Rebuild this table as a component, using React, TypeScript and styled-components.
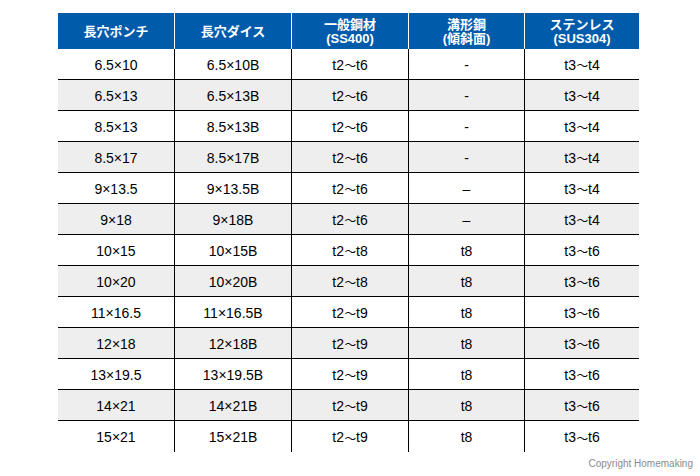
import React from "react";
import styled, { createGlobalStyle } from "styled-components";

const Global = createGlobalStyle`
  html, body { margin: 0; padding: 0; background: #fff; }
  body { font-family: "Liberation Sans", Arial, "Noto Sans CJK JP", sans-serif; }
`;

const Page = styled.div`
  width: 700px;
  height: 476px;
  box-sizing: border-box;
  padding: 13px 0 0 58px;
  display: flex;
  flex-direction: column;
`;

const Table = styled.div`
  display: grid;
  grid-template-columns: 117px 117px 117px 116px 114px;
  width: 581px;
`;

const HeadCell = styled.div<{ $last?: boolean }>`
  height: 36px;
  box-sizing: border-box;
  background: #005bab;
  color: #fff;
  font-family: "Liberation Sans", Arial, "Noto Sans CJK JP", sans-serif;
  font-weight: bold;
  font-size: 13px;
  line-height: 14px;
  display: flex;
  flex-direction: column;
  align-items: center;
  justify-content: center;
  text-align: center;
  border-right: ${(p) => (p.$last ? "none" : "1px solid #fff")};
  padding-top: 1px;
`;

const Cell = styled.div<{ $shade: boolean; $last: boolean; $lastRow: boolean }>`
  height: 31px;
  box-sizing: border-box;
  background: ${(p) => (p.$shade ? "#eeeeee" : "#ffffff")};
  color: #000;
  font-size: 14px;
  display: flex;
  align-items: center;
  justify-content: center;
  border-right: ${(p) => (p.$last ? "none" : "1px solid #000")};
  border-bottom: ${(p) => (p.$lastRow ? "none" : "1px solid #000")};
  padding-top: 1px;
`;

const Wave = styled.span`
  font-family: "Noto Sans CJK JP", sans-serif;
  font-size: 13px;
  display: inline-block;
  width: 12px;
  text-align: center;
  transform: scaleX(0.9);
`;

const Footer = styled.div`
  width: 635px;
  margin-top: 6px;
  text-align: right;
  font-size: 10px;
  color: #8a8a8a;
  font-family: "Liberation Sans", Arial, sans-serif;
`;

const headers: string[][] = [
  ["長穴ポンチ"],
  ["長穴ダイス"],
  ["一般鋼材", "(SS400)"],
  ["溝形鋼", "(傾斜面)"],
  ["ステンレス", "(SUS304)"],
];

const rows: string[][] = [
  ["6.5×10", "6.5×10B", "t2〜t6", "-", "t3〜t4"],
  ["6.5×13", "6.5×13B", "t2〜t6", "-", "t3〜t4"],
  ["8.5×13", "8.5×13B", "t2〜t6", "-", "t3〜t4"],
  ["8.5×17", "8.5×17B", "t2〜t6", "-", "t3〜t4"],
  ["9×13.5", "9×13.5B", "t2〜t6", "–", "t3〜t4"],
  ["9×18", "9×18B", "t2〜t6", "–", "t3〜t4"],
  ["10×15", "10×15B", "t2〜t8", "t8", "t3〜t6"],
  ["10×20", "10×20B", "t2〜t8", "t8", "t3〜t6"],
  ["11×16.5", "11×16.5B", "t2〜t9", "t8", "t3〜t6"],
  ["12×18", "12×18B", "t2〜t9", "t8", "t3〜t6"],
  ["13×19.5", "13×19.5B", "t2〜t9", "t8", "t3〜t6"],
  ["14×21", "14×21B", "t2〜t9", "t8", "t3〜t6"],
  ["15×21", "15×21B", "t2〜t9", "t8", "t3〜t6"],
];

function renderText(t: string) {
  if (!t.includes("〜")) return t;
  const [a, b] = t.split("〜");
  return (
    <>
      {a}
      <Wave>〜</Wave>
      {b}
    </>
  );
}

export default function App() {
  return (
    <>
      <Global />
      <Page>
        <Table>
          {headers.map((h, i) => (
            <HeadCell key={i} $last={i === headers.length - 1}>
              {h.map((line, j) => (
                <span key={j}>{line}</span>
              ))}
            </HeadCell>
          ))}
          {rows.map((r, ri) =>
            r.map((c, ci) => (
              <Cell
                key={`${ri}-${ci}`}
                $shade={ri % 2 === 1}
                $last={ci === r.length - 1}
                $lastRow={ri === rows.length - 1}
              >
                {renderText(c)}
              </Cell>
            ))
          )}
        </Table>
        <Footer>Copyright Homemaking</Footer>
      </Page>
    </>
  );
}
